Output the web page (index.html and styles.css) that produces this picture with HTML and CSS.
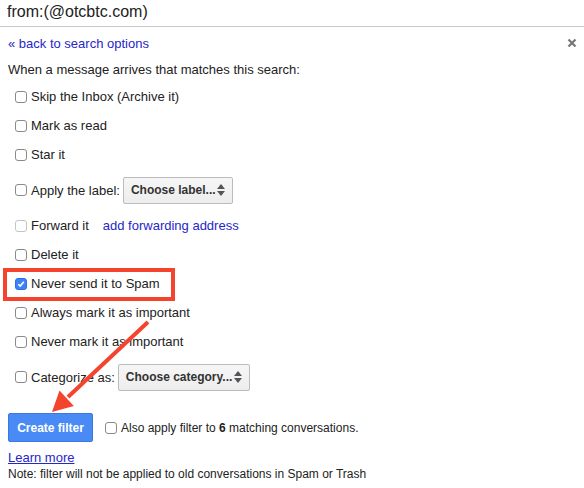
FILE: index.html
```html
<!DOCTYPE html>
<html>
<head>
<meta charset="utf-8">
<link rel="stylesheet" href="styles.css">
</head>
<body>
<div class="search">from:(@otcbtc.com)</div>
<div class="panel">
  <div class="top">
    <a class="link" href="#">« back to search options</a>
    <svg class="close" width="10" height="10" viewBox="0 0 10 10"><path d="M1.5 1.5L8.5 8.5M8.5 1.5L1.5 8.5" stroke="#777" stroke-width="2.2"/></svg>
  </div>
  <div class="intro">When a message arrives that matches this search:</div>
  <div class="row"><span class="cb"></span><span>Skip the Inbox (Archive it)</span></div>
  <div class="row"><span class="cb"></span><span>Mark as read</span></div>
  <div class="row"><span class="cb"></span><span>Star it</span></div>
  <div class="row tall"><span class="cb"></span><span>Apply the label:</span>
    <span class="select sel-label">Choose label...<span class="arrows"><i class="up"></i><i class="down"></i></span></span>
  </div>
  <div class="row"><span class="cb disabled"></span><span>Forward it</span><a class="link fwd" href="#">add forwarding address</a></div>
  <div class="row"><span class="cb"></span><span>Delete it</span></div>
  <div class="row"><span class="cb checked"><svg width="12" height="12" viewBox="0 0 12 12"><path d="M3.3 6.2L5.2 8.1L8.8 3.8" fill="none" stroke="#fff" stroke-width="1.6"/></svg></span><span>Never send it to Spam</span></div>
  <div class="row"><span class="cb"></span><span>Always mark it as important</span></div>
  <div class="row"><span class="cb"></span><span>Never mark it as important</span></div>
  <div class="row tall"><span class="cb"></span><span>Categorize as:</span>
    <span class="select sel-cat">Choose category...<span class="arrows"><i class="up"></i><i class="down"></i></span></span>
  </div>
  <div class="actions">
    <span class="btn">Create filter</span>
    <span class="cb"></span><span>Also apply filter to <b>6</b> matching conversations.</span>
  </div>
  <div class="learn"><a class="link u" href="#">Learn more</a></div>
  <div class="note">Note: filter will not be applied to old conversations in Spam or Trash</div>
</div>
<div class="highlight"></div>
<svg class="arrow" width="584" height="488" viewBox="0 0 584 488">
  <line x1="148" y1="322" x2="68" y2="397" stroke="#f4442e" stroke-width="4"/>
  <polygon points="52,412 59.5,390.5 73.8,406" fill="#f4442e"/>
</svg>
</body>
</html>
```
FILE: styles.css
```css
body {
  margin: 0;
  font-family: "Liberation Sans", Arial, sans-serif;
  font-size: 13px;
  color: #222;
  background: #fff;
  position: relative;
  width: 584px;
  height: 488px;
  overflow: hidden;
}
.search {
  height: 26px;
  border-bottom: 1px solid #c8c8c8;
  font-size: 16px;
  line-height: 24px;
  padding-left: 7px;
  color: #222;
}
.panel {
  padding: 0 7px 0 8px;
}
.link {
  color: #2626c9;
  text-decoration: none;
}
.link.u {
  text-decoration: underline;
}
.top {
  margin-top: 9px;
  height: 16px;
  line-height: 16px;
  display: flex;
  justify-content: space-between;
  align-items: center;
}
.close {
  margin-top: -2px;
}
.intro {
  margin-top: 10px;
  line-height: 16px;
}
.intro + .row {
  margin-top: 4px;
}
.row {
  height: 29px;
  display: flex;
  align-items: center;
  padding-left: 7px;
  white-space: nowrap;
}
.row.tall {
  height: 42px;
}
.cb {
  width: 12px;
  height: 12px;
  box-sizing: border-box;
  border: 1px solid #8a8a8a;
  border-radius: 3px;
  background: #fff;
  margin-right: 4px;
  flex: none;
  display: inline-flex;
}
.cb.disabled {
  border-color: #c4c4c4;
}
.cb.checked {
  background: #3b83f6;
  border-color: #2f6fe0;
}
.cb.checked svg {
  margin: -1px;
}
.fwd {
  margin-left: 14px;
}
.select {
  margin-left: 3px;
  height: 27px;
  box-sizing: border-box;
  border: 1px solid #bcbcbc;
  border-radius: 2px;
  background: linear-gradient(#f6f6f6, #ededed);
  font-weight: bold;
  font-size: 12px;
  color: #333;
  display: flex;
  align-items: center;
  justify-content: space-between;
  padding: 0 7px 0 7px;
  white-space: nowrap;
  flex: none;
}
.sel-label {
  width: 110px;
}
.sel-cat {
  width: 132px;
}
.arrows {
  display: flex;
  flex-direction: column;
  gap: 2px;
  flex: none;
}
.arrows i {
  width: 0;
  height: 0;
  border-left: 4px solid transparent;
  border-right: 4px solid transparent;
}
.arrows .up {
  border-bottom: 5px solid #555;
}
.arrows .down {
  border-top: 5px solid #555;
}
.actions {
  margin-top: 15px;
  display: flex;
  align-items: center;
  font-size: 12px;
  white-space: nowrap;
}
.btn {
  width: 85px;
  height: 29px;
  box-sizing: border-box;
  background: #4a8af4;
  border: 1px solid #3b78e7;
  border-radius: 2px;
  color: #fff;
  font-weight: bold;
  font-size: 12px;
  display: flex;
  align-items: center;
  justify-content: center;
  margin-right: 12px;
}
.learn {
  margin-top: 8px;
  line-height: 16px;
}
.note {
  line-height: 16px;
  font-size: 12px;
}
.highlight {
  position: absolute;
  left: 3px;
  top: 268px;
  width: 172px;
  height: 33px;
  box-sizing: border-box;
  border: 4px solid #f4442e;
}
.arrow {
  position: absolute;
  left: 0;
  top: 0;
  pointer-events: none;
}
```
